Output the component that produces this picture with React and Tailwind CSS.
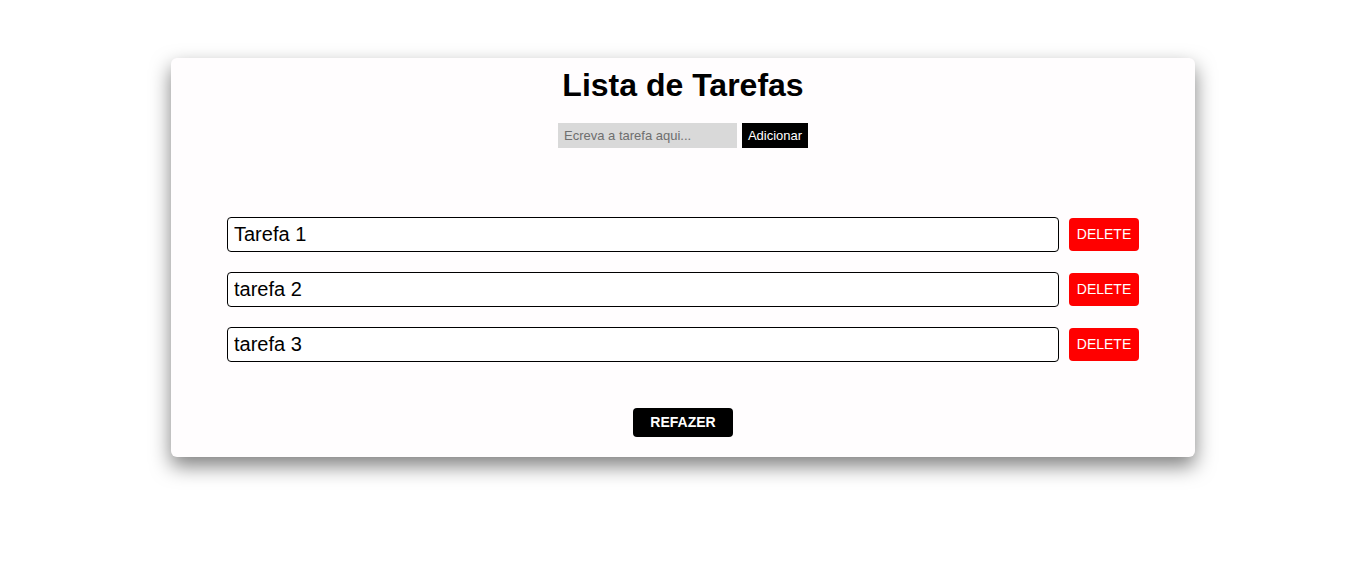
import React, { useState } from 'react';

export default function App() {
  const [tasks, setTasks] = useState(['Tarefa 1', 'tarefa 2', 'tarefa 3']);
  const [text, setText] = useState('');

  const add = () => {
    if (!text.trim()) return;
    setTasks(t => [...t, text.trim()]);
    setText('');
  };

  return (
    <div className="min-h-[583px] bg-white pt-[58px] font-['Liberation_Sans',Arial,sans-serif]">
      <div className="ml-[171px] w-[1024px] rounded-md bg-[#fffdfe] pt-[9px] pb-[20px] shadow-[0_9px_20px_rgba(0,0,0,0.5)]">
        <h1 className="text-center text-[32px] font-bold leading-[37px] text-black">Lista de Tarefas</h1>

        <div className="mt-[19px] flex justify-center gap-[5px]">
          <input
            value={text}
            onChange={e => setText(e.target.value)}
            placeholder="Ecreva a tarefa aqui..."
            className="h-[25px] w-[179px] bg-[#d9d9d9] px-[6px] text-[13px] text-black outline-none placeholder:text-[#6e6e6e]"
          />
          <button onClick={add} className="h-[25px] w-[66px] bg-black text-[13px] font-medium text-white">
            Adicionar
          </button>
        </div>

        <div className="mt-[69px] flex flex-col gap-[20px] px-[56px]">
          {tasks.map((t, i) => (
            <div key={i} className="flex items-center gap-[10px]">
              <input
                defaultValue={t}
                className="h-[35px] flex-1 rounded-[4px] border border-black bg-white px-[6px] text-[20px] text-black outline-none"
              />
              <button
                onClick={() => setTasks(ts => ts.filter((_, j) => j !== i))}
                className="h-[33px] w-[70px] rounded-[4px] bg-[#ff0000] text-[14px] text-white"
              >
                DELETE
              </button>
            </div>
          ))}
        </div>

        <div className="mt-[46px] flex justify-center">
          <button
            onClick={() => setTasks(['Tarefa 1', 'tarefa 2', 'tarefa 3'])}
            className="h-[29px] w-[100px] rounded-[4px] bg-black text-[14px] font-bold text-white"
          >
            REFAZER
          </button>
        </div>
      </div>
    </div>
  );
}
